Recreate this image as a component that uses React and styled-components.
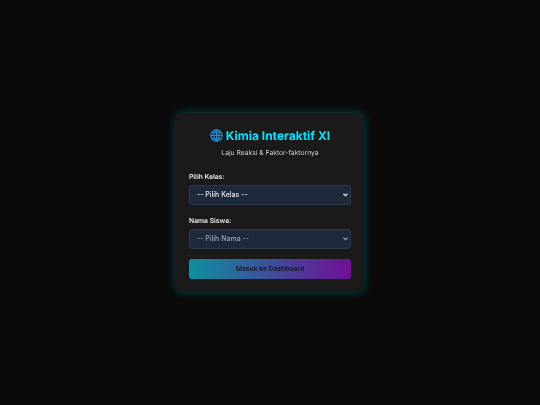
import React from 'react'
import styled, { createGlobalStyle } from 'styled-components'

const GlobalStyle = createGlobalStyle`
  html, body {
    margin: 0;
    padding: 0;
    background: #0a0a0a;
  }
  * {
    box-sizing: border-box;
  }
`

const Page = styled.div`
  width: 540px;
  height: 405px;
  display: flex;
  align-items: center;
  justify-content: center;
  background: #0a0a0a;
  font-family: Inter, "Liberation Sans", sans-serif;
  text-rendering: geometricPrecision;
`

const Card = styled.div`
  width: 188px;
  padding: 13px;
  background: #1a1a1a;
  border-radius: 8px;
  box-shadow: 0 0 10px rgba(0, 229, 255, 0.3);
  will-change: transform;
`

const Title = styled.h1`
  margin: 1.5px 0 0;
  display: flex;
  align-items: center;
  justify-content: center;
  gap: 3px;
  font-size: 12px;
  line-height: 16px;
  font-weight: 700;
  color: #00e5ff;
`

const Subtitle = styled.p`
  margin: 4px 0 13px;
  text-align: center;
  font-size: 6.75px;
  line-height: 10px;
  color: #d0d0d0;
`

const Field = styled.div`
  margin-bottom: 9.5px;
`

const Label = styled.label`
  display: block;
  margin-bottom: 3px;
  font-size: 6.75px;
  line-height: 11px;
  font-weight: 600;
  color: #e6e6e6;
`

const SelectWrap = styled.div`
  position: relative;
  color: ${props => props.$muted ? '#9aa3af' : '#e2e8f0'};
`

const Select = styled.select`
  display: block;
  width: 100%;
  height: 20.5px;
  padding: 0 7px;
  appearance: none;
  background: #1e293b;
  border: 1px solid #2c3a4e;
  border-radius: 3px;
  font-family: inherit;
  font-size: 7px;
  font-weight: 500;
  color: inherit;
  outline: none;
`

const Chevron = styled.svg`
  position: absolute;
  top: 8.5px;
  right: 3px;
  width: 5px;
  height: 4px;
  pointer-events: none;
`

const Button = styled.button`
  display: block;
  width: 100%;
  height: 20.5px;
  margin-top: 0.5px;
  padding: 0;
  border: none;
  border-radius: 3px;
  background: linear-gradient(90deg, #0e8f9e, #6f0f96);
  font-family: inherit;
  font-size: 6.75px;
  font-weight: 600;
  color: #0f172a;
`

const Globe = () =>
  <svg width="13" height="13" viewBox="0 0 24 24" fill="none" stroke="#1f8fd6" strokeWidth="2">
    <circle cx="12" cy="12" r="10.5" />
    <ellipse cx="12" cy="12" rx="4.8" ry="10.5" />
    <path d="M12 1.5v21M1.5 12h21M3 6.8h18M3 17.2h18" />
  </svg>

const Arrow = () =>
  <Chevron viewBox="0 0 10 8" fill="none" stroke="currentColor" strokeWidth="2.4">
    <path d="M1 1.5l4 4 4-4" />
  </Chevron>

const App = () =>
  <Page>
    <GlobalStyle />
    <Card>
      <Title><Globe />Kimia Interaktif XI</Title>
      <Subtitle>Laju Reaksi &amp; Faktor-faktornya</Subtitle>
      <Field>
        <Label>Pilih Kelas:</Label>
        <SelectWrap>
          <Select defaultValue="">
            <option value="">-- Pilih Kelas --</option>
          </Select>
          <Arrow />
        </SelectWrap>
      </Field>
      <Field>
        <Label>Nama Siswa:</Label>
        <SelectWrap $muted>
          <Select defaultValue="">
            <option value="">-- Pilih Nama --</option>
          </Select>
          <Arrow />
        </SelectWrap>
      </Field>
      <Button>Masuk ke Dashboard</Button>
    </Card>
  </Page>

export default App
